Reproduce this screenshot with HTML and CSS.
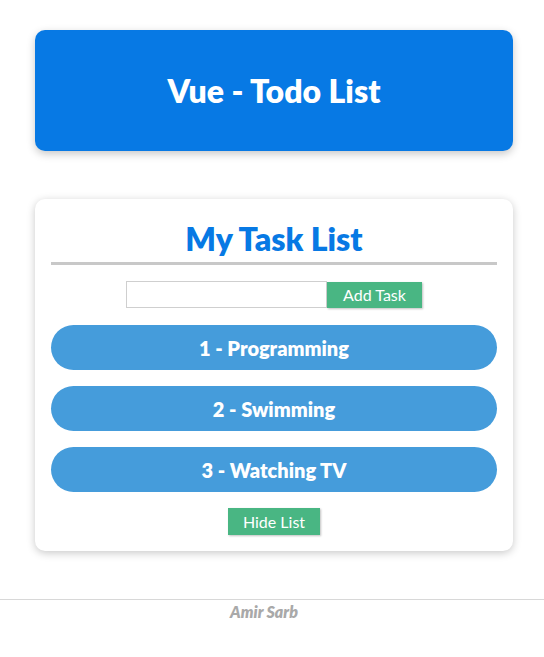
FILE: index.html
```html
<!DOCTYPE html>
<html lang="en">
<head>
<meta charset="utf-8">
<title>Vue - Todo List</title>
<link rel="stylesheet" href="styles.css">
</head>
<body>
  <main class="wrap">
    <header class="banner">
      <h1 class="banner-title">Vue - Todo List</h1>
    </header>
    <section class="card">
      <h2 class="card-title">My Task List</h2>
      <div class="add-row">
        <input class="task-input" type="text">
        <button class="btn">Add Task</button>
      </div>
      <ul class="tasks">
        <li class="task">1 - Programming</li>
        <li class="task">2 - Swimming</li>
        <li class="task">3 - Watching TV</li>
      </ul>
      <div class="actions">
        <button class="btn btn-hide">Hide List</button>
      </div>
    </section>
  </main>
  <footer class="footer">
    <p class="author">Amir Sarb</p>
  </footer>
</body>
</html>
```

FILE: styles.css
```css
* { box-sizing: border-box; }
html, body { margin: 0; padding: 0; background: #fff; }
body {
  font-family: Lato, "Noto Sans", sans-serif;
  color: #222;
}
.wrap {
  width: 478px;
  margin: 30px 0 0 35px;
  padding-bottom: 48px;
}
.banner {
  height: 121px;
  background: #0779e4;
  border-radius: 10px;
  box-shadow: 0 3px 8px rgba(0,0,0,0.22);
  display: flex;
  align-items: center;
  justify-content: center;
}
.banner-title {
  margin: 0;
  color: #fff;
  font-size: 32px;
  font-weight: 800;
  line-height: 1;
}
.card {
  margin-top: 48px;
  background: #fff;
  border-radius: 10px;
  box-shadow: 0 2px 8px rgba(0,0,0,0.22);
  padding: 16px 16px 16px;
}
.card-title {
  margin: 0;
  color: #0779e4;
  font-size: 32px;
  font-weight: 800;
  line-height: 47px;
  text-align: center;
  border-bottom: 3px solid #c8c8c8;
}
.add-row {
  display: flex;
  justify-content: center;
  align-items: center;
  margin-top: 16px;
}
.task-input {
  width: 201px;
  height: 27px;
  border: 1px solid #cfcfcf;
  padding: 0 6px;
  margin: 0;
  font: inherit;
}
.btn {
  background: #49b683;
  color: #fff;
  border: none;
  font-family: inherit;
  font-size: 16px;
  height: 26px;
  padding: 0 16px;
  box-shadow: 1px 1px 2px rgba(0,0,0,0.25);
  cursor: pointer;
}
.add-row .btn { width: 95px; padding: 0; }
.tasks {
  list-style: none;
  margin: 17px 0 0;
  padding: 0;
  display: flex;
  flex-direction: column;
  gap: 16px;
}
.task {
  height: 45px;
  background: #459cdb;
  border-radius: 23px;
  color: #fff;
  font-weight: 800;
  font-size: 20px;
  display: flex;
  align-items: center;
  justify-content: center;
}
.actions {
  display: flex;
  justify-content: center;
  margin-top: 16px;
}
.btn-hide { width: 92px; height: 27px; padding: 0; }
.footer {
  border-top: 1px solid #d8d8d8;
  text-align: center;
}
.author {
  margin: 2px 0 0;
  padding-right: 16px;
  color: #a9a9a9;
  font-weight: 800;
  font-style: italic;
  font-size: 16px;
}
```
